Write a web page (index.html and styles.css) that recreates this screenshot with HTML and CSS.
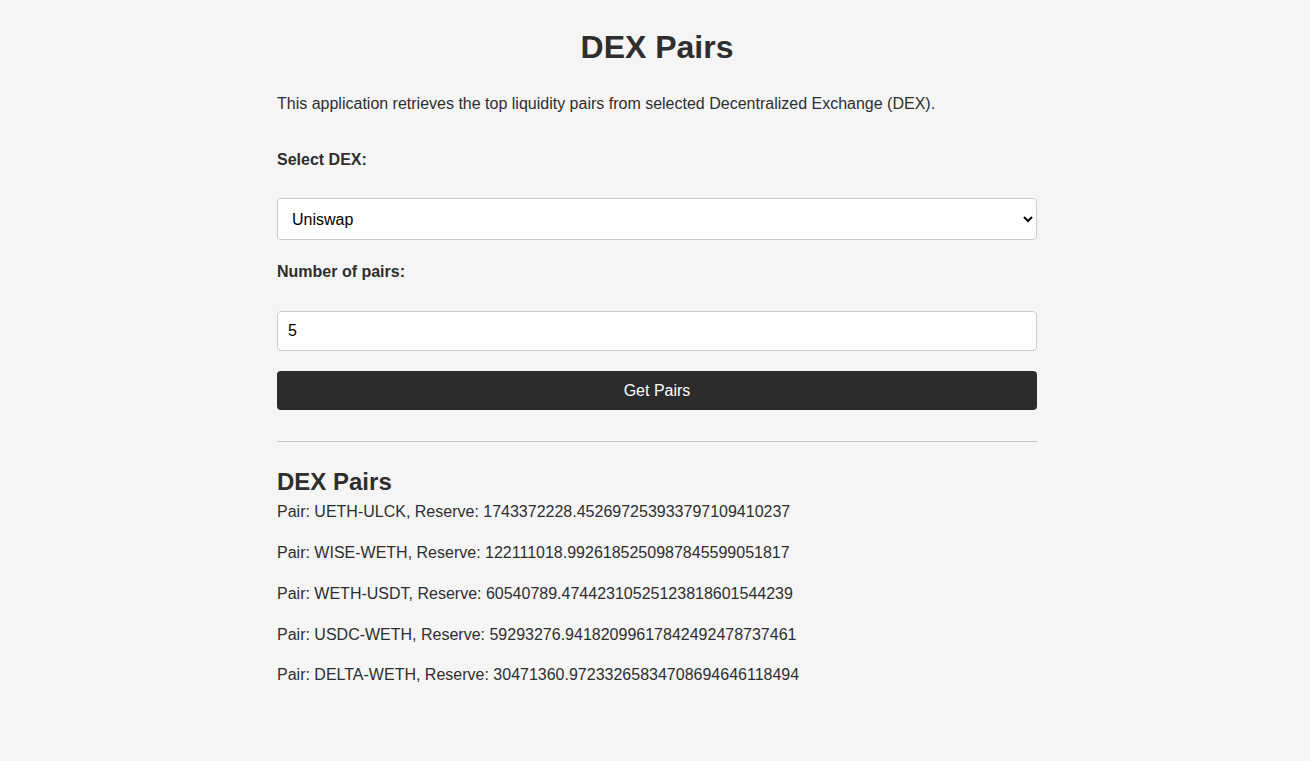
FILE: index.html
```html
<!DOCTYPE html>
<html lang="en">
<head>
<meta charset="utf-8">
<title>DEX Pairs</title>
<link rel="stylesheet" href="styles.css">
</head>
<body>
<main class="container">
  <h1 class="title">DEX Pairs</h1>
  <p class="intro">This application retrieves the top liquidity pairs from selected Decentralized Exchange (DEX).</p>
  <form class="form">
    <label class="label label-dex" for="dex">Select DEX:</label>
    <select id="dex" class="field field-select">
      <option>Uniswap</option>
      <option>Sushiswap</option>
    </select>
    <label class="label label-num" for="num">Number of pairs:</label>
    <input id="num" class="field field-input" type="number" value="5">
    <button type="button" class="btn">Get Pairs</button>
  </form>
  <hr class="divider">
  <section class="results">
    <h2 class="results-title">DEX Pairs</h2>
    <p class="pair">Pair: UETH-ULCK, Reserve: 1743372228.452697253933797109410237</p>
    <p class="pair">Pair: WISE-WETH, Reserve: 122111018.9926185250987845599051817</p>
    <p class="pair">Pair: WETH-USDT, Reserve: 60540789.47442310525123818601544239</p>
    <p class="pair">Pair: USDC-WETH, Reserve: 59293276.94182099617842492478737461</p>
    <p class="pair">Pair: DELTA-WETH, Reserve: 30471360.97233265834708694646118494</p>
  </section>
</main>
</body>
</html>
```

FILE: styles.css
```css
html, body {
  margin: 0;
  padding: 0;
}
body {
  background: #f5f5f5;
  color: #2e2e2e;
  font-family: "Liberation Sans", Arial, Helvetica, sans-serif;
  padding-left: 4px;
}
.container {
  width: 760px;
  margin: 0 auto;
  padding-top: 27px;
  display: flex;
  flex-direction: column;
}
.title {
  margin: 0;
  font-size: 32px;
  line-height: 40px;
  font-weight: 700;
  text-align: center;
}
.intro {
  margin: 26.5px 0 0;
  font-size: 16px;
  line-height: 20px;
}
.form {
  display: flex;
  flex-direction: column;
}
.label {
  display: block;
  font-weight: 700;
  font-size: 16px;
  line-height: 20px;
}
.label-dex { margin-top: 36px; }
.label-num { margin-top: 21.5px; }
.field {
  box-sizing: border-box;
  width: 100%;
  border: 1px solid #cccccc;
  border-radius: 4px;
  background: #ffffff;
  color: #000;
  font-family: "Liberation Sans", Arial, Helvetica, sans-serif;
  font-size: 16px;
  margin: 28.5px 0 0;
}
.field-select {
  height: 42px;
  padding: 0 10px;
}
.field-input {
  height: 40px;
  padding: 0 10px;
  margin-top: 29.5px;
}
.btn {
  box-sizing: border-box;
  margin-top: 20px;
  height: 39px;
  width: 100%;
  border: none;
  border-radius: 4px;
  background: #2c2c2c;
  color: #ffffff;
  font-family: "Liberation Sans", Arial, Helvetica, sans-serif;
  font-size: 16px;
}
.divider {
  margin: 31px 0 0;
  border: none;
  border-top: 1px solid #c8c8c8;
  height: 0;
}
.results-title {
  margin: 25.7px 0 0;
  font-size: 24px;
  line-height: 28px;
  font-weight: 700;
}
.pair {
  margin: 20.7px 0 0;
  font-size: 16px;
  line-height: 20px;
}
.results-title + .pair { margin-top: 6.8px; }
```
